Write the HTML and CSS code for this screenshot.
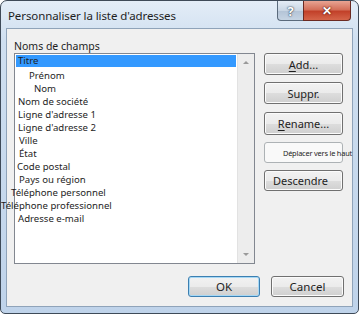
FILE: index.html
```html
<!DOCTYPE html>
<html lang="fr">

<head>
    <meta charset="UTF-8">
    <title>Personnaliser la liste d'adresses</title>
    <link rel="stylesheet" href="styles.css">
</head>

<body>
    <div class="window">
        <div class="titlebar">
            <span class="title">Personnaliser la liste d'adresses</span>
            <div class="caption-buttons">
                <span class="cap-help">?</span>
                <span class="cap-close">&#x2715;</span>
            </div>
        </div>

        <div class="client">
            <div class="main">
                <div class="left">
                    <div class="label">Noms de champs</div>
                    <div class="listbox">
                        <div class="items">
                            <div class="item selected">Titre</div>
                            <div class="item lvl1">Prénom</div>
                            <div class="item lvl2">Nom</div>
                            <div class="item">Nom de société</div>
                            <div class="item">Ligne d'adresse 1</div>
                            <div class="item">Ligne d'adresse 2</div>
                            <div class="item nudge">Ville</div>
                            <div class="item nudge">État</div>
                            <div class="item back">Code postal</div>
                            <div class="item nudge">Pays ou région</div>
                            <div class="item out1">Téléphone personnel</div>
                            <div class="item out2">Téléphone professionnel</div>
                            <div class="item">Adresse e-mail</div>
                        </div>
                        <div class="scrollbar">
                            <span class="arrow up"></span>
                            <span class="arrow down"></span>
                        </div>
                    </div>
                </div>

                <div class="right">
                    <button class="btn"><u>A</u>dd...</button>
                    <button class="btn">Suppr.</button>
                    <button class="btn"><u>R</u>ename...</button>
                    <button class="btn btn-up"><span>Déplacer vers le haut</span></button>
                    <button class="btn btn-down">Descendre</button>
                </div>
            </div>

            <div class="footer">
                <button class="btn btn-ok">OK</button>
                <button class="btn btn-cancel">Cancel</button>
            </div>
        </div>
    </div>
</body>

</html>
```

FILE: styles.css
```css
* {
    margin: 0;
    padding: 0;
    box-sizing: border-box;
}

body {
    font-family: "Noto Sans", "Open Sans", sans-serif;
    background: #ffffff;
    width: 359px;
    height: 314px;
    overflow: hidden;
}

.window {
    width: 359px;
    height: 314px;
    border: 1px solid #3e4a58;
    border-radius: 7px 7px 5px 5px;
    background: linear-gradient(to bottom, #e3edf7 0px, #cfdff0 40px, #bfd3ea 100%);
    display: flex;
    flex-direction: column;
}

.titlebar {
    height: 27px;
    display: flex;
    justify-content: space-between;
    align-items: flex-start;
    padding-left: 7px;
}

.title {
    font-size: 11.5px;
    color: #1e1e1e;
    padding-top: 7px;
    letter-spacing: -0.1px;
}

.caption-buttons {
    display: flex;
    margin-right: 7px;
}

.cap-help,
.cap-close {
    height: 20px;
    display: flex;
    justify-content: center;
    align-items: center;
    color: #ffffff;
    font-weight: bold;
    border: 1px solid #5a6a7c;
    border-top: none;
}

.cap-help {
    width: 26px;
    font-size: 13px;
    border-right: none;
    border-radius: 0 0 0 4px;
    background: linear-gradient(to bottom, #e4ecf5 0%, #c9d6e4 50%, #b3c3d6 51%, #c6d4e3 100%);
    text-shadow: 0 0 2px #2d3d50, 0 0 1px #2d3d50;
}

.cap-close {
    width: 48px;
    font-size: 12px;
    border-color: #6b2a22;
    border-radius: 0 0 4px 0;
    background: linear-gradient(to bottom, #e8a493 0%, #d4705a 45%, #c2412a 55%, #d5654a 100%);
    text-shadow: 0 0 2px #5a1408, 0 0 1px #5a1408;
}

.client {
    flex: 1;
    margin: 0 5px 6px 5px;
    border: 1px solid #8fa3b9;
    background: #f0f0f0;
    display: flex;
    flex-direction: column;
    padding: 0 7px 0 7px;
}

.main {
    display: flex;
    gap: 9px;
}

.label {
    font-size: 10.5px;
    height: 24px;
    padding-top: 10px;
    color: #1e1e1e;
}

.listbox {
    width: 241px;
    height: 211px;
    border: 1px solid #828790;
    background: #ffffff;
    display: flex;
}

.items {
    flex: 1;
    padding: 1px 1px 0 1px;
    font-size: 9.6px;
    color: #1e1e1e;
}

.item {
    height: 13px;
    line-height: 13px;
    padding-left: 2px;
    white-space: nowrap;
}

.selected {
    background: #3399ff;
    height: 12px;
    line-height: 12px;
    margin-bottom: 2px;
}

.lvl1 {
    padding-left: 13px;
}

.lvl2 {
    padding-left: 18px;
}

.nudge {
    padding-left: 3px;
}

.back {
    padding-left: 1px;
}

.out1 {
    margin-left: -7px;
}

.out2 {
    margin-left: -17px;
}

.scrollbar {
    width: 17px;
    background: #ededed;
    border-left: 1px solid #e2e2e2;
    display: flex;
    flex-direction: column;
    justify-content: space-between;
    align-items: center;
    padding: 7px 0 7px 0;
}

.arrow {
    width: 0;
    height: 0;
    border-left: 3px solid transparent;
    border-right: 3px solid transparent;
}

.arrow.up {
    border-bottom: 3px solid #9a9a9a;
}

.arrow.down {
    border-top: 3px solid #9a9a9a;
}

.right {
    width: 79px;
    display: flex;
    flex-direction: column;
    padding-top: 24px;
}

.btn {
    font-family: "Noto Sans", "Open Sans", sans-serif;
    font-size: 11px;
    color: #1e1e1e;
    height: 22px;
    border: 1px solid #707070;
    border-radius: 3px;
    background: linear-gradient(to bottom, #f2f2f2 0%, #ebebeb 50%, #dddddd 51%, #cfcfcf 100%);
    box-shadow: inset 0 0 0 1px #fbfbfb;
}

.btn u {
    text-decoration-thickness: 1px;
    text-underline-offset: 2px;
}

.right .btn + .btn {
    margin-top: 7px;
}

.right .btn:nth-child(3) {
    margin-top: 8px;
    height: 23px;
}

.right .btn-up {
    margin-top: 76px;
    height: 21px;
    border-color: #adb2b5;
    background: #f9f9f9;
    box-shadow: none;
    display: flex;
    justify-content: flex-end;
    align-items: center;
    overflow: visible;
}

.btn-up span {
    font-size: 7.4px;
    margin-right: -10px;
    white-space: nowrap;
    letter-spacing: -0.2px;
}

.right .btn-down {
    margin-top: 9px;
    height: 21px;
    text-align: left;
    padding-left: 8px;
}

.footer {
    display: flex;
    justify-content: flex-end;
    gap: 11px;
    margin-top: 12px;
    padding-right: 1px;
}

.btn-ok,
.btn-cancel {
    height: 21px;
    font-size: 11.5px;
}

.btn-ok {
    width: 72px;
    border-color: #3c7fb1;
    box-shadow: inset 0 0 0 1px #a6d8f5;
}

.btn-cancel {
    width: 73px;
}
```
